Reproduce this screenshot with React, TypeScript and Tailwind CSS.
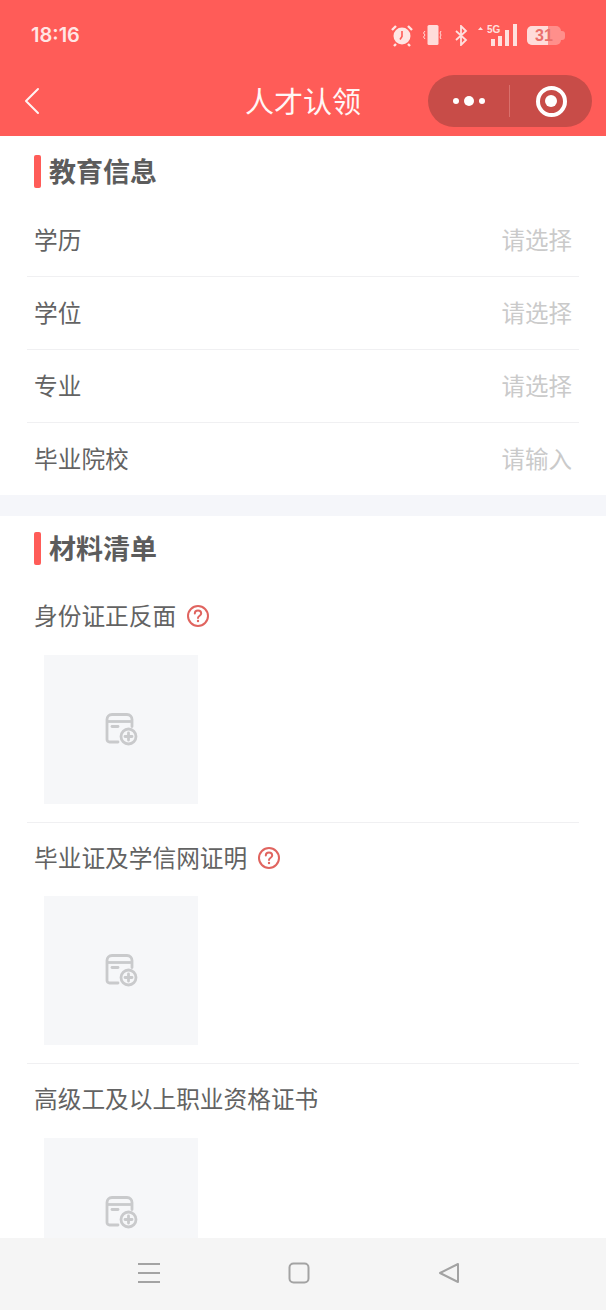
import React from "react";

const font = { fontFamily: '"Noto Sans CJK SC", "Noto Sans", sans-serif' };

function Row({ label, hint }: { label: string; hint: string }) {
  return (
    <div className="mx-[27px] h-[73px] flex items-center justify-between pl-[7px] pr-[7px] border-b border-[#f0f0f2]">
      <span className="text-[23.7px] leading-none text-[#636363]">{label}</span>
      <span className="text-[23.5px] leading-none text-[#cacaca]">{hint}</span>
    </div>
  );
}

function Title({ text }: { text: string }) {
  return (
    <div className="flex items-center h-[33px] ml-[34px] gap-2">
      <div className="w-[7px] h-[33px] rounded-[2px] bg-[#ff5c58]" />
      <span className="text-[27px] leading-none font-bold text-[#5c5c5c] -mt-[3px]">{text}</span>
    </div>
  );
}

function Help() {
  return (
    <svg width="24" height="24" viewBox="0 0 24 24" fill="none" className="ml-[10px] -mt-[1px]">
      <circle cx="12" cy="12" r="10" stroke="#e0645f" strokeWidth="2" />
      <path d="M8.8 9.6c0-1.9 1.4-3 3.2-3s3.2 1.1 3.2 2.8c0 2.3-3.2 2.3-3.2 4.6" stroke="#e0645f" strokeWidth="2" strokeLinecap="round" />
      <circle cx="12" cy="17" r="1.2" fill="#e0645f" />
    </svg>
  );
}

function UploadIcon() {
  return (
    <svg width="34" height="34" viewBox="0 0 34 34" fill="none" className="-mt-[1px]">
      <path d="M14 30H5.5A2.5 2.5 0 0 1 3 27.5V7.5C3 4.5 5 2.5 8 2.5h15c3 0 5 2 5 5v7" stroke="#c9cacc" strokeWidth="2.8" strokeLinecap="round" />
      <path d="M3 9.5h25" stroke="#c9cacc" strokeWidth="2.8" />
      <path d="M8 14.5h6" stroke="#c9cacc" strokeWidth="2.8" strokeLinecap="round" />
      <circle cx="24.5" cy="24.5" r="7.5" fill="#f6f7f9" stroke="#c9cacc" strokeWidth="2.8" />
      <path d="M24.5 21v7M21 24.5h7" stroke="#c9cacc" strokeWidth="2.8" strokeLinecap="round" />
    </svg>
  );
}

function Material({ label, help, border }: { label: string; help?: boolean; border?: boolean }) {
  return (
    <div className={`mx-[27px] ${border ? "border-b border-[#f0f0f2] pb-[18px]" : ""}`}>
      <div className="flex items-center h-[24px] pl-[7px]">
        <span className="text-[23.7px] leading-none text-[#636363] -mt-[1px]">{label}</span>
        {help && <Help />}
      </div>
      <div className="ml-[17px] mt-[26px] w-[154px] h-[149px] bg-[#f6f7f9] flex items-center justify-center">
        <UploadIcon />
      </div>
    </div>
  );
}

function StatusIcons() {
  return (
    <div className="flex items-center">
      <svg width="24" height="24" viewBox="0 0 24 24" fill="none">
        <circle cx="12" cy="13" r="8.5" fill="#ffe6e4" />
        <path d="M12 8v5.5l-2 3" stroke="#ff5c58" strokeWidth="1.6" />
        <path d="M2 7l4-4M22 7l-4-4M6 21l-2 2M18 21l2 2" stroke="#ffe6e4" strokeWidth="2.4" />
      </svg>
      <svg width="21" height="22" viewBox="0 0 21 22" fill="none" className="ml-[8px]">
        <rect x="5.5" y="1" width="11" height="20" rx="1.5" fill="#ffdcda" />
        <path d="M3 7l-1.5 2L3 11l-1.5 2L3 15M19 7l-1 2 1 2-1 2 1 2" stroke="#ffdcda" strokeWidth="1" />
      </svg>
      <svg width="15" height="21" viewBox="0 0 15 21" fill="none" className="ml-[11px]">
        <path d="M2 6l10 9-5 5V1l5 5L2 15" stroke="#ffe0de" strokeWidth="1.8" />
      </svg>
      <svg width="41" height="23" viewBox="0 0 41 23" className="ml-[9px]">
        <path d="M0 6l2.5-3L5 6z" fill="#ffe0de" />
        <text x="9" y="9" fontSize="10" fontWeight="700" fill="#ffe0de" fontFamily="Liberation Sans">5G</text>
        <rect x="13" y="15" width="4" height="7" fill="#ffe0de" />
        <rect x="20" y="12" width="4" height="10" fill="#ffe0de" />
        <rect x="27" y="6" width="4" height="16" fill="#ffe0de" />
        <rect x="35" y="0" width="4" height="22" fill="#ffe0de" />
      </svg>
      <div className="ml-[8px] flex items-center">
        <div className="relative w-[34px] h-[19px] rounded-[5px] bg-[#ff8f8b] overflow-hidden flex">
          <div className="w-[21px] bg-[#ffdcda]" />
          <span className="absolute inset-0 text-center text-[16px] leading-[19px] font-bold text-[#ea6f6b]" style={{ fontFamily: '"Liberation Sans", sans-serif' }}>31</span>
        </div>
        <div className="w-[4px] h-[9px] rounded-r-[3px] bg-[#ff8f8b]" />
      </div>
    </div>
  );
}

export default function App() {
  return (
    <div className="w-[606px] h-[1310px] flex flex-col overflow-hidden bg-white" style={font}>
      <header className="h-[136px] shrink-0 bg-[#ff5c58] flex flex-col">
        <div className="h-[70px] flex items-center justify-between pl-[31px] pr-[41px]">
          <span className="text-[20px] font-semibold text-[#ffe6e4]" style={{ fontFamily: '"Inter", sans-serif' }}>18:16</span>
          <StatusIcons />
        </div>
        <div className="relative h-[66px] flex items-center justify-center">
          <svg width="18" height="28" viewBox="0 0 18 28" fill="none" className="absolute left-[23px] top-[17px]">
            <path d="M15 2L3 14l12 12" stroke="#fff4f3" strokeWidth="2" strokeLinecap="round" strokeLinejoin="round" />
          </svg>
          <span className="text-[29px] leading-none text-[#fff6f5] -mt-[5px]">人才认领</span>
          <div className="absolute left-[428px] top-[5px] w-[164px] h-[52px] rounded-full bg-[#c84c48] flex items-center">
            <div className="w-[81px] flex items-center justify-center gap-[5px]">
              <span className="w-[6px] h-[6px] rounded-full bg-white" />
              <span className="w-[10px] h-[10px] rounded-full bg-white" />
              <span className="w-[6px] h-[6px] rounded-full bg-white" />
            </div>
            <div className="w-px h-[32px] bg-[#d9706c]" />
            <div className="flex-1 flex items-center justify-center">
              <div className="w-[31px] h-[31px] rounded-full border-[4px] border-white flex items-center justify-center">
                <div className="w-[12px] h-[12px] rounded-full bg-white" />
              </div>
            </div>
          </div>
        </div>
      </header>

      <main className="flex-1 min-h-0 overflow-hidden">
        <section className="pt-[19px]">
          <Title text="教育信息" />
          <div className="mt-[16px]">
            <Row label="学历" hint="请选择" />
            <Row label="学位" hint="请选择" />
            <Row label="专业" hint="请选择" />
            <Row label="毕业院校" hint="请输入" />
          </div>
        </section>
        <div className="h-[21px] -mt-px bg-[#f5f6fa]" />
        <section className="pt-[16px]">
          <Title text="材料清单" />
          <div className="mt-[39.75px] flex flex-col gap-[23.5px]">
            <Material label="身份证正反面" help border />
            <Material label="毕业证及学信网证明" help border />
            <Material label="高级工及以上职业资格证书" />
          </div>
        </section>
      </main>

      <footer className="h-[72px] shrink-0 bg-[#f5f5f5] flex items-center pl-[137px]">
        <div className="flex items-center -mt-[2px]">
          <svg width="24" height="22" viewBox="0 0 24 22" fill="none">
            <path d="M1 2h22M1 11h22M1 20h22" stroke="#a3a3a3" strokeWidth="2" />
          </svg>
          <svg width="22" height="22" viewBox="0 0 22 22" fill="none" className="ml-[127px]">
            <rect x="1.5" y="1.5" width="19" height="19" rx="4" stroke="#a3a3a3" strokeWidth="2" />
          </svg>
          <svg width="22" height="22" viewBox="0 0 22 22" fill="none" className="ml-[128px]">
            <path d="M20 2v18L2 11z" stroke="#a3a3a3" strokeWidth="2" strokeLinejoin="round" />
          </svg>
        </div>
      </footer>
    </div>
  );
}
